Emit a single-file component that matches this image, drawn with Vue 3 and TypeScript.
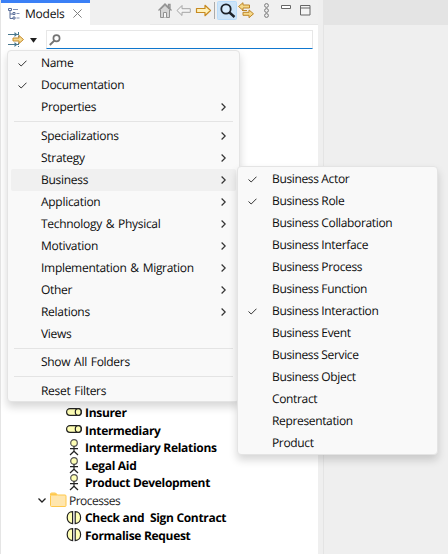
<script setup lang="ts">
interface MenuItem {
  label: string
  checked?: boolean
  sub?: boolean
  active?: boolean
}

const groups: MenuItem[][] = [
  [
    { label: 'Name', checked: true },
    { label: 'Documentation', checked: true },
    { label: 'Properties', sub: true },
  ],
  [
    { label: 'Specializations', sub: true },
    { label: 'Strategy', sub: true },
    { label: 'Business', sub: true, active: true },
    { label: 'Application', sub: true },
    { label: 'Technology & Physical', sub: true },
    { label: 'Motivation', sub: true },
    { label: 'Implementation & Migration', sub: true },
    { label: 'Other', sub: true },
    { label: 'Relations', sub: true },
    { label: 'Views' },
  ],
  [{ label: 'Show All Folders' }],
  [{ label: 'Reset Filters' }],
]

const business: MenuItem[] = [
  { label: 'Business Actor', checked: true },
  { label: 'Business Role', checked: true },
  { label: 'Business Collaboration' },
  { label: 'Business Interface' },
  { label: 'Business Process' },
  { label: 'Business Function' },
  { label: 'Business Interaction', checked: true },
  { label: 'Business Event' },
  { label: 'Business Service' },
  { label: 'Business Object' },
  { label: 'Contract' },
  { label: 'Representation' },
  { label: 'Product' },
]

type Kind = 'role' | 'actor' | 'folder' | 'interaction'
const tree: { label: string; kind: Kind }[] = [
  { label: 'Insurer', kind: 'role' },
  { label: 'Intermediary', kind: 'role' },
  { label: 'Intermediary Relations', kind: 'actor' },
  { label: 'Legal Aid', kind: 'actor' },
  { label: 'Product Development', kind: 'actor' },
  { label: 'Processes', kind: 'folder' },
  { label: 'Check and \u00a0Sign Contract', kind: 'interaction' },
  { label: 'Formalise Request', kind: 'interaction' },
]
</script>

<template>
  <div class="window">
    <section class="view">
      <header class="tabs">
        <div class="tab">
          <svg class="tab-icon" width="12" height="12" viewBox="0 0 12 12" fill="none" stroke="#5b6f99">
            <path d="M.5 .5h3v2h-3zM2 2.500V10.500H5M2 6H5" />
            <path d="M5 4.500h2v2h-2zM5 9h2v2h-2z" />
            <path d="M5 1.500h5M8.500 5.500h3M8.500 10h3" stroke="#8291b3" />
          </svg>
          <span class="tab-title">Models</span>
          <svg class="close" width="9" height="9" viewBox="0 0 9 9" fill="none" stroke="#808080"><path d="M.4 .4l8.200 8.200M8.600 .4L.4 8.600" /></svg>
        </div>
        <div class="tools">
          <svg width="168" height="24" viewBox="150 0 168 24" fill="none">
            <g stroke="#929292" fill="#d5d5d5">
              <path d="M160.500 9.500V17.500H169.500V9.500L165 5.300z" />
              <path d="M158.500 10.500L165 4L171.500 10.500M168.500 7V4.500h1.500v4" fill="none" stroke-width="1.300" />
              <path d="M163.500 17.500v-5h3v5" fill="#f6f6f6" />
            </g>
            <path d="M177 10.500l5-5v3.200h8.300v3.600h-8.300v3.200z" fill="#f4f4f4" stroke="#a4a4a4" stroke-linejoin="round" />
            <path d="M210.500 10.500l-5.500-5.200v3.200h-8.500v4h8.500v3.200z" fill="#fff1b8" stroke="#c78a22" stroke-width="1.200" stroke-linejoin="round" />
            <path d="M214.500 2v17" stroke="#ababab" />
            <rect x="217.500" y="1.500" width="19" height="18" rx="1" fill="#cce4f8" stroke="#b9dcfa" />
            <circle cx="226" cy="9" r="4.700" stroke="#1e2329" stroke-width="1.800" fill="#d9edfd" />
            <path d="M229.500 12.500l5 4.500" stroke="#1e2329" stroke-width="2.400" />
            <g fill="#f5d98a" stroke="#bd8528" stroke-linejoin="round">
              <path d="M238.500 6.500l4.500-3.800v2.300h6.500v3h-6.500v2.300z" />
              <path d="M253.500 13.800l-4.500-3.900v2.400h-6v3h6v2.400z" />
              <path d="M242 10.500h5" />
            </g>
            <g stroke="#777"><circle cx="266.500" cy="5.500" r="1.900" /><circle cx="266.500" cy="10.500" r="1.900" /><circle cx="266.500" cy="15.500" r="1.900" /></g>
            <path d="M281.500 5.500h9v3h-9z" stroke="#666" fill="#fff" />
            <path d="M300.500 5.500h9.500v9.500h-9.500zM300.500 8h9.500" stroke="#666" fill="#f4f4f4" />
          </svg>
        </div>
      </header>

      <div class="search">
        <svg width="24" height="18" viewBox="0 0 24 18" fill="none">
          <path d="M0 3.500h11M0 13.500h11" stroke="#49788f" />
          <path d="M6.500 1l3 2.500l-3 2.500zM6.500 11l3 2.500l-3 2.500z" fill="#49788f" />
          <path d="M10.500 1v15" stroke="#49788f" stroke-dasharray="2 1.500" />
          <path d="M15.500 8.500l-4.500-4v2.500h-6v3h6v2.500z" fill="#f4d990" stroke="#c68a2b" stroke-linejoin="round" />
        </svg>
        <svg class="drop" width="7" height="5" viewBox="0 0 7 5"><path d="M0 0h7L3.500 4.800z" fill="#202020" /></svg>
        <div class="field">
          <svg width="12" height="12" viewBox="0 0 12 12" fill="none" stroke="#747474"><circle cx="7.500" cy="4.300" r="3.100" stroke-width="1.700" /><path d="M5.300 6.600L.8 11" stroke-width="2" /></svg>
        </div>
      </div>

      <ul class="tree">
        <li v-for="n in tree" :key="n.label" :class="n.kind">
          <svg v-if="n.kind === 'role'" class="icon" width="16" height="16" viewBox="0 0 16 16" fill="#ffffb5" stroke="#222" stroke-width="1.200">
            <path d="M4 3.600h8a3.400 3.400 0 0 1 0 6.800h-8a3.400 3.400 0 0 1 0-6.800z" /><ellipse cx="12.200" cy="7" rx="2.900" ry="3.400" />
          </svg>
          <svg v-else-if="n.kind === 'actor'" class="icon" width="16" height="17" viewBox="0 0 16 17" fill="none" stroke="#222" stroke-width="1.200">
            <circle cx="8" cy="4" r="3.300" fill="#ffffb5" stroke="#555" /><path d="M8 7.300v5M4 9.600h8M8 12.200l-4 3.800M8 12.200l4 3.800" />
          </svg>
          <template v-else-if="n.kind === 'folder'">
            <svg class="chevron" width="8" height="5" viewBox="0 0 8 5" fill="none" stroke="#222" stroke-width="1.300"><path d="M.5 .5L4 4L7.500 .5" /></svg>
            <svg class="folder-icon" width="17" height="16" viewBox="0 0 17 16"><path d="M.5 3.500V2Q.5 1 1.500 1H5.500L7.500 3H15Q16 3 16 4V13.500Q16 14.500 15 14.500H1.500Q.5 14.500 .5 13.500z" fill="#ffe6ae" stroke="#ffc84b" /><path d="M1 1.500h5l1.500 2H1z" fill="#ffc84b" /></svg>
          </template>
          <svg v-else class="icon" width="16" height="16" viewBox="0 0 16 16" fill="#ffffb5" stroke="#222" stroke-width="1.200">
            <path d="M6.600 1.600v12C-.6 13.600-.6 1.600 6.600 1.600zM9.200 1.600v12c7.200 0 7.200-12 0-12z" />
          </svg>
          <span>{{ n.label }}</span>
        </li>
      </ul>
    </section>
    <aside class="editor"><div class="editor-bar" /></aside>

    <div class="menu main-menu">
      <div v-for="(g, i) in groups" :key="i" class="group">
        <div v-for="m in g" :key="m.label" class="item" :class="{ active: m.active }">
          <span class="check"><svg v-if="m.checked" width="9" height="7" viewBox="0 0 9 7" fill="none" stroke="#333"><path d="M.5 3.500L3.200 6L8.500 .7" /></svg></span>
          <span class="label">{{ m.label }}</span>
          <svg v-if="m.sub" width="5" height="8" viewBox="0 0 5 8" fill="none" stroke="#333" stroke-width="1.200"><path d="M.6 .5L4.200 4L.6 7.500" /></svg>
        </div>
      </div>
    </div>

    <div class="menu sub-menu">
      <div v-for="m in business" :key="m.label" class="item">
        <span class="check"><svg v-if="m.checked" width="9" height="7" viewBox="0 0 9 7" fill="none" stroke="#333"><path d="M.5 3.500L3.200 6L8.500 .7" /></svg></span>
        <span class="label">{{ m.label }}</span>
      </div>
    </div>
  </div>
</template>

<style>
body { margin: 0; overflow: hidden; }
</style>

<style scoped>
.window {
  position: relative;
  display: flex;
  width: 448px;
  height: 554px;
  box-sizing: border-box;
  overflow: hidden;
  background: #efefef;
  color: #0c0c0c;
  font: 12px/22px "Open Sans", "Noto Sans", sans-serif;
  text-rendering: geometricPrecision;
}
svg { display: block; flex: none; }
.view {
  display: flex;
  flex-direction: column;
  width: 318px;
  height: 554px;
  box-sizing: border-box;
  border-left: 1px solid #e5e5e5;
  background: #fff;
}
.tabs { display: flex; justify-content: space-between; height: 25px; background: #f0f0f0; box-sizing: border-box; }
.tab {
  display: flex;
  align-items: center;
  width: 89px;
  height: 25px;
  box-sizing: border-box;
  padding: 0 0 1px 7px;
  border-top: 3px solid #3b80f6;
  background: #fff;
}
.tab-title { margin-left: 5px; width: 39px; white-space: nowrap; letter-spacing: -0.2px; }
.close { margin-left: 9px; }
.tools { border-bottom: 1px solid #e7e7e7; }
.search { display: flex; align-items: flex-start; padding: 6px 5px 0 7px; height: 18px; }
.search .drop { margin: 7px 9px 0 -2px; }
.field {
  display: flex;
  flex: 1;
  height: 19px;
  box-sizing: border-box;
  margin-top: -1px;
  padding: 3px 0 0 2px;
  border: 1px solid #e7e7e7;
  border-bottom-color: #0f77cf;
}
.tree { margin: 355px 0 0; padding: 0; list-style: none; line-height: 17.5px; font-weight: 700; letter-spacing: -0.31px; color: #000; }
.tree li { display: flex; align-items: center; height: 17.5px; padding-left: 65px; white-space: pre; }
.tree .icon { margin-right: 3px; }
.tree li.folder { padding-left: 37px; font-weight: 400; letter-spacing: -0.5px; color: #222; }
.chevron { margin-right: 4px; }
.folder-icon { margin-right: 2px; }
.editor { flex: 1; margin-left: 5px; border-left: 1px solid #e4e4e4; }
.editor-bar { height: 25px; background: #e4e4e4; }
.menu {
  position: absolute;
  box-sizing: border-box;
  border: 1px solid #e4e4e4;
  border-radius: 4px;
  background: #f9f9f9;
  box-shadow: 0 5px 9px rgba(0, 0, 0, 0.16);
}
.main-menu { left: 7px; top: 50px; width: 233px; height: 352px; padding: 1px 3px; letter-spacing: -0.29px; word-spacing: 1px; }
.sub-menu { left: 237px; top: 166px; width: 201px; height: 289px; padding: 1px 3px; letter-spacing: -0.35px; }
.group + .group { margin-top: 3px; padding-top: 3px; }
.group + .group::before { content: ""; display: block; height: 1px; margin: -3px 3px 2.500px; background: #e4e4e4; }
.item { display: flex; align-items: center; height: 22px; border-radius: 2px; white-space: nowrap; }
.item.active { background: #f0f0f0; }
.check { width: 30px; box-sizing: border-box; padding-left: 7px; }
.sub-menu .check { width: 31px; }
.label { flex: 1; }
.main-menu .item > svg { margin-right: 10px; }
</style>
